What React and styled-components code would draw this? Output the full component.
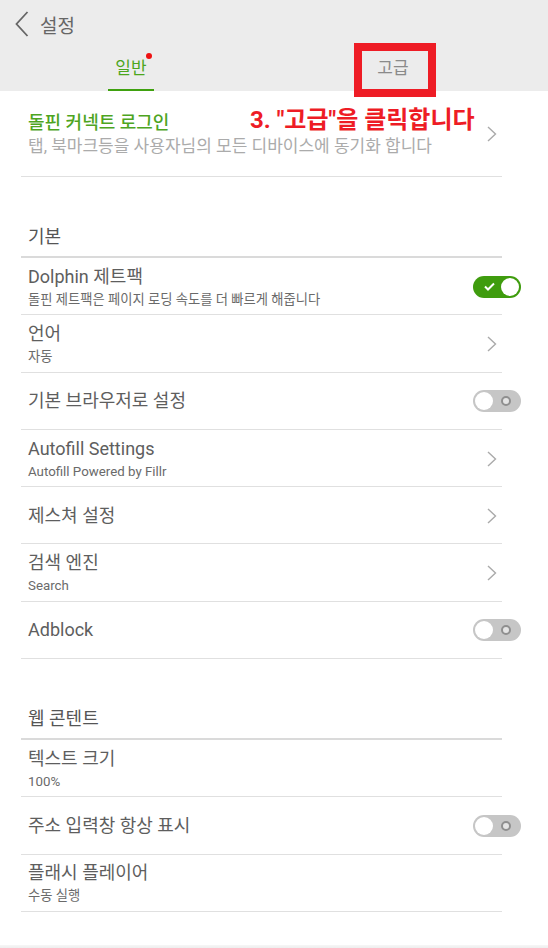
import React from 'react';
import styled, { createGlobalStyle } from 'styled-components';

const GlobalStyle = createGlobalStyle`
  html, body {
    margin: 0;
    padding: 0;
    background: #ffffff;
  }
  body {
    font-family: Roboto, "Noto Sans CJK KR", "Noto Sans", sans-serif;
    -webkit-font-smoothing: antialiased;
  }
`;

const Screen = styled.div`
  position: relative;
  width: 548px;
  height: 948px;
  overflow: hidden;
  display: flex;
  flex-direction: column;
  background: #ffffff;
`;

const Header = styled.header`
  background: #ececec;
  display: flex;
  flex-direction: column;
`;

const TopBar = styled.div`
  height: 48px;
  display: flex;
  align-items: center;
  padding-left: 15px;
  gap: 11px;
  color: #666666;
  font-size: 19px;
`;

const Tabs = styled.nav`
  height: 43px;
  display: grid;
  grid-template-columns: 1fr 1fr;
  padding-right: 24px;
`;

const Tab = styled.div`
  display: flex;
  justify-content: center;
  align-items: flex-end;
`;

const TabLabel = styled.span`
  position: relative;
  padding: 0 7px 10px;
  font-size: 17px;
  line-height: 21px;
  color: ${(p) => (p.active ? '#4ca61c' : '#8a8a8a')};
  border-bottom: 2px solid ${(p) => (p.active ? '#3fa10f' : 'transparent')};

  ${(p) =>
    p.dot &&
    `
    &::after {
      content: "";
      position: absolute;
      top: -5px;
      right: 2px;
      width: 6px;
      height: 6px;
      border-radius: 50%;
      background: #ee1111;
    }
  `}
`;

const List = styled.main`
  display: flex;
  flex-direction: column;
`;

const Row = styled.div`
  position: relative;
  box-sizing: border-box;
  height: ${(p) => p.h || 57.3}px;
  margin-left: 21px;
  padding: 0 27px 0 7px;
  display: flex;
  align-items: center;
  justify-content: space-between;

  &::after {
    content: "";
    position: absolute;
    left: 0;
    right: 46px;
    bottom: 0;
    height: 1px;
    background: #e0e0e0;
  }
`;

const TextBlock = styled.div`
  display: flex;
  flex-direction: column;
`;

const Title = styled.div`
  font-size: 18px;
  line-height: 22px;
  color: ${(p) => (p.green ? '#4ea51f' : '#5e5e5e')};
  font-weight: ${(p) => (p.green ? 500 : 400)};
`;

const Sub = styled.div`
  font-size: ${(p) => (p.large ? 17 : 13.3)}px;
  line-height: ${(p) => (p.large ? 22 : 17)}px;
  margin-top: ${(p) => (p.large ? 1 : 3)}px;
  color: ${(p) => (p.large ? '#ababab' : '#6a6a6a')};
`;

const SectionHead = styled.div`
  position: relative;
  box-sizing: border-box;
  height: 81px;
  margin-left: 21px;
  padding: 0 0 10px 7px;
  display: flex;
  align-items: flex-end;
  font-size: 18px;
  line-height: 22px;
  color: #555555;

  &::after {
    content: "";
    position: absolute;
    left: 0;
    right: 46px;
    bottom: 0;
    height: 2px;
    background: #dadada;
  }
`;

const ChevronWrap = styled.span`
  display: flex;
  margin-right: 24px;
`;

const Track = styled.span`
  box-sizing: border-box;
  width: 48px;
  height: 22px;
  border-radius: 11px;
  background: ${(p) => (p.on ? '#3f9c0e' : '#c6c6c6')};
  display: flex;
  align-items: center;
  justify-content: space-between;
  padding: 0 2px 0 ${(p) => (p.on ? 11 : 2)}px;
`;

const Knob = styled.span`
  width: 18px;
  height: 18px;
  border-radius: 50%;
  background: #ffffff;
`;

const Ring = styled.span`
  box-sizing: border-box;
  width: 10px;
  height: 10px;
  margin-right: 8px;
  border-radius: 50%;
  border: 2px solid #8f8f8f;
  background: #e4e4e4;
`;

const Annotation = styled.div`
  position: absolute;
  left: 250px;
  top: 105px;
  font-size: 24px;
  font-weight: 700;
  line-height: 30px;
  color: #ee1c25;
  white-space: nowrap;
`;

const HighlightBox = styled.div`
  position: absolute;
  left: 354px;
  top: 43px;
  width: 82px;
  height: 54px;
  box-sizing: border-box;
  border: 8px solid #ee1c25;
`;

const Spacer = styled.div`
  flex: 1;
`;

const BottomEdge = styled.div`
  height: 3px;
  background: linear-gradient(#f6f6f6, #eeeeee);
`;

function BackIcon() {
  return (
    <svg width="14" height="26" viewBox="0 0 14 26">
      <path d="M12.5 1 L1.5 13 L12.5 25" fill="none" stroke="#666" strokeWidth="1.8" />
    </svg>
  );
}

function Chevron() {
  return (
    <ChevronWrap>
      <svg width="10" height="16" viewBox="0 0 10 16">
        <path d="M1 1 L8.5 8 L1 15" fill="none" stroke="#aaaaaa" strokeWidth="1.4" />
      </svg>
    </ChevronWrap>
  );
}

function Toggle({ on }) {
  if (on) {
    return (
      <Track on>
        <svg width="11" height="9" viewBox="0 0 11 9">
          <path d="M1 4.5 L4 7.5 L10 1.5" fill="none" stroke="#fff" strokeWidth="2" />
        </svg>
        <Knob />
      </Track>
    );
  }
  return (
    <Track>
      <Knob />
      <Ring />
    </Track>
  );
}

function SettingRow({ title, sub, control, h }) {
  return (
    <Row h={h}>
      <TextBlock>
        <Title>{title}</Title>
        {sub && <Sub>{sub}</Sub>}
      </TextBlock>
      {control === 'chevron' && <Chevron />}
      {control === 'on' && <Toggle on />}
      {control === 'off' && <Toggle />}
    </Row>
  );
}

const basic = [
  { title: 'Dolphin 제트팩', sub: '돌핀 제트팩은 페이지 로딩 속도를 더 빠르게 해줍니다', control: 'on' },
  { title: '언어', sub: '자동', control: 'chevron' },
  { title: '기본 브라우저로 설정', control: 'off' },
  { title: 'Autofill Settings', sub: 'Autofill Powered by Fillr', control: 'chevron' },
  { title: '제스쳐 설정', control: 'chevron' },
  { title: '검색 엔진', sub: 'Search', control: 'chevron' },
  { title: 'Adblock', control: 'off' },
];

const web = [
  { title: '텍스트 크기', sub: '100%' },
  { title: '주소 입력창 항상 표시', control: 'off' },
  { title: '플래시 플레이어', sub: '수동 실행' },
];

export default function App() {
  return (
    <Screen>
      <GlobalStyle />
      <Header>
        <TopBar>
          <BackIcon />
          <span>설정</span>
        </TopBar>
        <Tabs>
          <Tab>
            <TabLabel active dot>일반</TabLabel>
          </Tab>
          <Tab>
            <TabLabel>고급</TabLabel>
          </Tab>
        </Tabs>
      </Header>

      <List>
        <Row h={86}>
          <TextBlock>
            <Title green>돌핀 커넥트 로그인</Title>
            <Sub large>탭, 북마크등을 사용자님의 모든 디바이스에 동기화 합니다</Sub>
          </TextBlock>
          <Chevron />
        </Row>

        <SectionHead>기본</SectionHead>
        {basic.map((r) => (
          <SettingRow key={r.title} {...r} />
        ))}

        <SectionHead>웹 콘텐트</SectionHead>
        {web.map((r) => (
          <SettingRow key={r.title} {...r} />
        ))}
      </List>

      <Spacer />
      <BottomEdge />

      <HighlightBox />
      <Annotation>3. "고급"을 클릭합니다</Annotation>
    </Screen>
  );
}
